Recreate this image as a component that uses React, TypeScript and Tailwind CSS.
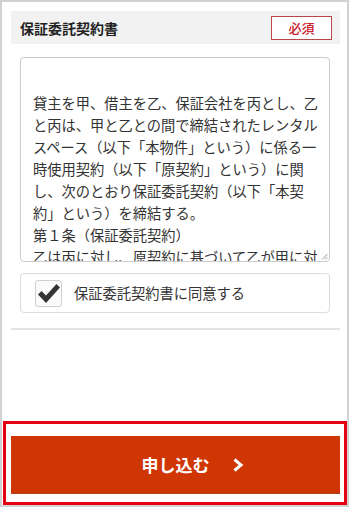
const contractText =
  '貸主を甲、借主を乙、保証会社を丙とし、乙と丙は、甲と乙との間で締結されたレンタルスペース（以下「本物件」という）に係る一時使用契約（以下「原契約」という）に関し、次のとおり保証委託契約（以下「本契約」という）を締結する。\n第１条（保証委託契約）\n乙は丙に対し、原契約に基づいて乙が甲に対して負担する一切の債務について、丙が連帯して保証することを委託し、丙はこれを受託する。\n第２条（保証の範囲）\n丙が保証する範囲は、原契約に基づく利用料その他乙が甲に対して負担する一切の債務とする。';

const jp = { fontFamily: '"Noto Sans CJK JP", "Noto Sans", sans-serif' };

export default function App() {
  return (
    <div className="w-[351px] h-[508px] bg-white" style={jp}>
      <div className="w-[349px] h-[507px] border-2 border-[#d2d2d2] flex flex-col">
        <div className="ml-[9px] mt-[9px] w-[329px] h-[33px] bg-[#f2f2f2] flex items-center justify-between pl-[9px] pr-[8px]">
          <span className="text-[14px] font-bold text-[#222] leading-none">保証委託契約書</span>
          <span className="w-[61px] h-[24px] bg-white border border-[#b8464a] text-[#c8202c] text-[13px] font-medium flex items-center justify-center leading-none">
            必須
          </span>
        </div>

        {/* contract box: scrolled text, grip in the corner */}
        <div className="relative ml-[18px] mt-[13px] w-[310px] h-[205px] shrink-0 border border-[#cccccc] rounded-[4px] overflow-hidden">
          <div lang="ja" className="pt-[34px] pl-[12px] pr-[8px] text-[14.25px] leading-[22px] text-[#333] whitespace-pre-wrap">
            {contractText}
          </div>
          <svg className="absolute right-[1px] bottom-[1px]" width="7" height="7" viewBox="0 0 7 7">
            <path d="M6.5 1 L1 6.5 M6.5 4 L4 6.5" stroke="#9a9a9a" strokeWidth="1" />
          </svg>
        </div>

        <label className="ml-[18px] mt-[11px] w-[310px] h-[40px] shrink-0 border border-[#dcdcdc] rounded-[4px] flex items-center pl-[14px]">
          <span className="w-[27px] h-[27px] border border-[#cfcfcf] rounded-[3px] bg-[#fafafa] flex items-center justify-center">
            <svg width="24" height="21" viewBox="0 0 24 21">
              <path d="M1 11.5 L4.5 8 L9 12.5 L19.5 1 L23 4.5 L9 20 Z" fill="#333" />
            </svg>
          </span>
          <span className="ml-[12px] text-[14.25px] text-[#333] leading-none">保証委託契約書に同意する</span>
        </label>

        <div className="ml-[9px] mt-[15px] w-[329px] h-[2px] bg-[#e4e4e4]" />

        <div className="mt-auto ml-[1px] w-[344px] h-[84px] border-[3px] border-[#e60012]">
          <button className="ml-[5px] mt-[12px] w-[329px] h-[58px] bg-[#d03604] border-b border-[#a8431f] relative flex items-center justify-center">
            <span className="text-white font-bold text-[17px] leading-none relative">
              申し込む
              <svg
                className="absolute left-[calc(100%+22px)] top-1/2 -translate-y-1/2"
                width="12"
                height="14"
                viewBox="0 0 12 14"
              >
                <polyline points="2.5,1.5 9,7 2.5,12.5" fill="none" stroke="#fff" strokeWidth="3" />
              </svg>
            </span>
          </button>
        </div>
      </div>
    </div>
  );
}
